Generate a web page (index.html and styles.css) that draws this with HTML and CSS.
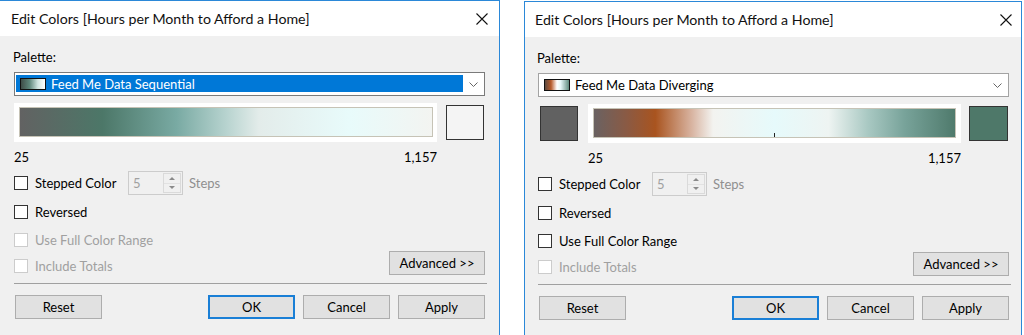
FILE: index.html
```html
<!DOCTYPE html>
<html>
<head>
<meta charset="utf-8">
<link rel="stylesheet" href="styles.css">
</head>
<body>
<div class="stage">
  <section class="dialog dlg-left">
    <header class="titlebar">
      <span class="title">Edit Colors [Hours per Month to Afford a Home]</span>
      <svg class="close" width="12" height="12" viewBox="0 0 12 12"><path d="M0.5 0.5 L11.5 11.5 M11.5 0.5 L0.5 11.5" stroke="#111" stroke-width="1.1" fill="none"/></svg>
    </header>
    <div class="content">
      <div class="label">Palette:</div>
      <div class="select focused">
        <div class="select-value"><span class="pal-icon seq"></span><span class="pal-name">Feed Me Data Sequential</span></div>
        <span class="select-arrow"><svg width="9" height="5" viewBox="0 0 9 5"><polyline points="0.5,0.5 4.5,4.5 8.5,0.5" fill="none" stroke="#666" stroke-width="1"/></svg></span>
      </div>
      <div class="ramp-row">
        <div class="ramp-frame"><div class="ramp seq"></div></div>
        <div class="swatch light"></div>
      </div>
      <div class="values"><span>25</span><span>1,157</span></div>
      <div class="opt-row tall">
        <label class="check wide"><span class="box"></span><span>Stepped Color</span></label>
        <div class="spinner"><span class="spin-val">5</span><span class="spin-btns"><i class="up"></i><i class="down"></i></span></div>
        <span class="steps">Steps</span>
      </div>
      <div class="opt-row r2">
        <label class="check"><span class="box"></span><span>Reversed</span></label>
      </div>
      <div class="opt-row r3">
        <label class="check disabled"><span class="box"></span><span>Use Full Color Range</span></label>
      </div>
      <div class="opt-row last">
        <label class="check disabled low"><span class="box"></span><span>Include Totals</span></label>
        <button class="btn adv">Advanced &gt;&gt;</button>
      </div>
      <div class="sep"></div>
      <div class="buttons">
        <button class="btn">Reset</button>
        <span class="spacer"></span>
        <button class="btn default">OK</button>
        <button class="btn">Cancel</button>
        <button class="btn">Apply</button>
      </div>
    </div>
  </section>

  <section class="dialog dlg-right">
    <header class="titlebar">
      <span class="title">Edit Colors [Hours per Month to Afford a Home]</span>
      <svg class="close" width="12" height="12" viewBox="0 0 12 12"><path d="M0.5 0.5 L11.5 11.5 M11.5 0.5 L0.5 11.5" stroke="#111" stroke-width="1.1" fill="none"/></svg>
    </header>
    <div class="content">
      <div class="label">Palette:</div>
      <div class="select">
        <div class="select-value plain"><span class="pal-icon div"></span><span class="pal-name">Feed Me Data Diverging</span></div>
        <span class="select-arrow"><svg width="9" height="5" viewBox="0 0 9 5"><polyline points="0.5,0.5 4.5,4.5 8.5,0.5" fill="none" stroke="#666" stroke-width="1"/></svg></span>
      </div>
      <div class="ramp-row">
        <div class="swatch gray"></div>
        <div class="ramp-frame"><div class="ramp div"><span class="tick"></span></div></div>
        <div class="swatch green"></div>
      </div>
      <div class="values"><span>25</span><span>1,157</span></div>
      <div class="opt-row tall">
        <label class="check wide"><span class="box"></span><span>Stepped Color</span></label>
        <div class="spinner"><span class="spin-val">5</span><span class="spin-btns"><i class="up"></i><i class="down"></i></span></div>
        <span class="steps">Steps</span>
      </div>
      <div class="opt-row r2">
        <label class="check"><span class="box"></span><span>Reversed</span></label>
      </div>
      <div class="opt-row r3">
        <label class="check"><span class="box"></span><span>Use Full Color Range</span></label>
      </div>
      <div class="opt-row last">
        <label class="check disabled low"><span class="box"></span><span>Include Totals</span></label>
        <button class="btn adv">Advanced &gt;&gt;</button>
      </div>
      <div class="sep"></div>
      <div class="buttons">
        <button class="btn">Reset</button>
        <span class="spacer"></span>
        <button class="btn default">OK</button>
        <button class="btn">Cancel</button>
        <button class="btn">Apply</button>
      </div>
    </div>
  </section>
</div>
</body>
</html>
```

FILE: styles.css
```css
* { box-sizing: border-box; }
html, body {
  margin: 0;
  padding: 0;
  background: #ffffff;
  width: 1024px;
  height: 335px;
  overflow: hidden;
  font-family: "Segoe UI", Lato, "Liberation Sans", sans-serif;
  font-size: 13px;
  color: #000;
}
.stage {
  display: flex;
  align-items: flex-start;
  gap: 24px;
}
.dialog {
  border: 1px solid #2b88d8;
  background: #f0f0f0;
  height: 350px;
  flex: none;
}
.dlg-left { width: 501px; margin-left: -1px; }
.dlg-right { width: 498px; margin-top: 1px; }

.titlebar {
  height: 35px;
  background: #fff;
  display: flex;
  align-items: center;
  justify-content: space-between;
}
.dlg-left .titlebar { padding: 0 11px 0 11px; }
.dlg-right .titlebar { padding: 0 9px 0 10px; }
.title { font-size: 14.2px; color: #111; }
.close { display: block; }

.content { padding-top: 13px; }
.dlg-left .content { padding-left: 14px; padding-right: 14px; }
.dlg-right .content { padding-left: 13px; padding-right: 12px; }

.label { height: 16px; line-height: 16px; margin-left: -1px; }

.select {
  margin-top: 7px;
  height: 24px;
  border: 1px solid #a3a3a3;
  background: #fff;
  display: flex;
  padding: 2px 0 3px 1px;
}
.select.focused { border-color: #7a7a7a; }
.select-value {
  flex: 1;
  background: #0078d7;
  color: #fff;
  display: flex;
  align-items: center;
  padding-left: 4px;
  line-height: 16px;
}
.select-value.plain { background: transparent; color: #000; }
.pal-icon {
  width: 26px;
  height: 12px;
  border: 1px solid #111;
  margin-right: 5px;
  flex: none;
}
.pal-icon.seq { background: linear-gradient(90deg, #3e4c47 0%, #5d857a 35%, #cfe3e0 70%, #ffffff 100%); }
.pal-icon.div { background: linear-gradient(90deg, #5e4a40 0%, #b65a2a 25%, #ffffff 50%, #e6f8f8 65%, #5f8c7e 100%); }
.select-arrow {
  width: 21px;
  flex: none;
  display: flex;
  align-items: center;
  justify-content: center;
  padding-top: 1px;
}
.select-arrow svg { display: block; }

.ramp-row {
  margin-top: 7px;
  display: flex;
  align-items: flex-start;
}
.ramp-frame {
  background: #fff;
  height: 39px;
  padding: 4px 4px 5px 5px;
}
.ramp {
  height: 30px;
  border: 1px solid #c6c3b6;
  position: relative;
}
.ramp.seq {
  background: linear-gradient(90deg, #626262 0%, #4c7768 20%, #79aaa3 38%, #b7d3cf 50%, #e3ecea 58%, #e8fbfb 80%, #f3f4f1 100%);
}
.ramp.div {
  background: linear-gradient(90deg, #6a6262 0%, #8a5a44 9%, #a9541f 17%, #d8b3a0 27%, #f3f3f0 33%, #e6fafb 50%, #eef4f2 65%, #a8c8c2 76%, #78a39a 86%, #4f7a6c 100%);
}
.tick {
  position: absolute;
  left: 180px;
  bottom: 0;
  width: 1px;
  height: 4px;
  background: #222;
}
.swatch {
  border: 1px solid #333;
  height: 35px;
  margin-top: 2px;
  flex: none;
}
.swatch.light { background: #f4f4f4; width: 38px; }
.swatch.gray { background: #616161; width: 38px; margin-left: 2px; margin-right: 10px; }
.swatch.green { background: #4e7869; width: 39px; margin-left: 8px; }

.dlg-left .ramp-frame { width: 423px; margin-right: 9px; }
.dlg-right .ramp-frame { width: 373px; padding-right: 5px; }

.values {
  margin-top: 7px;
  height: 16px;
  line-height: 16px;
  display: flex;
  justify-content: space-between;
  color: #000;
}
.dlg-left .values { width: 423px; }
.dlg-right .values { width: 373px; margin-left: 50px; }

.opt-row { display: flex; align-items: center; }
.opt-row.tall { margin-top: 6px; height: 24px; }
.opt-row.r2 { margin-top: 7px; height: 20px; }
.opt-row.r3 { margin-top: 8px; height: 20px; }
.opt-row.last { margin-top: 1px; height: 24px; justify-content: space-between; align-items: flex-end; }

.check {
  display: flex;
  align-items: center;
  height: 20px;
  line-height: 16px;
}
.check.wide { width: 114px; }
.check.low { margin-bottom: -1px; }
.box {
  width: 14px;
  height: 14px;
  border: 1px solid #333;
  background: #fff;
  margin-right: 7px;
  flex: none;
}
.check.disabled { color: #a0a0a0; }
.check.disabled .box { border-color: #cccccc; }

.spinner {
  width: 55px;
  height: 24px;
  border: 1px solid #cccccc;
  background: #f0f0f0;
  display: flex;
  align-items: center;
  justify-content: space-between;
  padding: 1px 1px 1px 4px;
  color: #a0a0a0;
}
.spin-btns {
  width: 18px;
  height: 20px;
  border: 1px solid #dadada;
  display: flex;
  flex-direction: column;
}
.spin-btns i {
  flex: 1;
  display: flex;
  align-items: center;
  justify-content: center;
}
.spin-btns i::before {
  content: "";
  width: 0;
  height: 0;
  border-left: 3px solid transparent;
  border-right: 3px solid transparent;
}
.spin-btns .up::before { border-bottom: 3px solid #8a8a8a; }
.spin-btns .down::before { border-top: 3px solid #8a8a8a; }
.spin-btns .up { border-bottom: 1px solid #e2e2e2; }
.steps { margin-left: 6px; color: #8f8f8f; }

.btn {
  font-family: inherit;
  font-size: 13px;
  color: #000;
  background: #e1e1e1;
  border: 1px solid #adadad;
  height: 24px;
  width: 87px;
  padding: 0;
  margin: 0;
  line-height: 20px;
}
.btn.adv { width: 96px; }
.btn.default { border: 2px solid #1a7fd6; }

.sep {
  margin-top: 8px;
  height: 1px;
  background: #a0a0a0;
  margin-right: -2px;
}
.buttons {
  margin-top: 11px;
  display: flex;
  gap: 8px;
}
.buttons .btn:first-child { margin-left: 1px; }
.spacer { flex: 1; }
```
